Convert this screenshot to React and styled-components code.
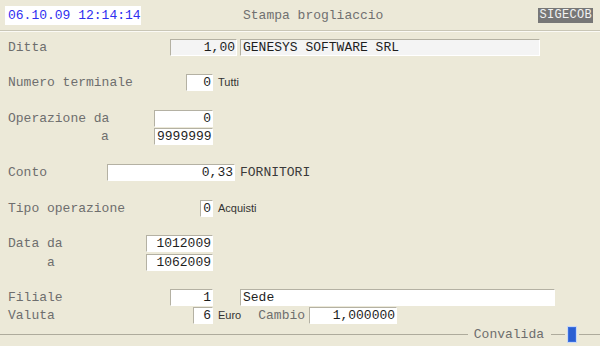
import React from "react";
import styled, { createGlobalStyle } from "styled-components";

const Global = createGlobalStyle`
  html, body {
    margin: 0;
    padding: 0;
    background: #ece9d8;
  }
  body {
    font-family: "Liberation Mono", "Courier New", monospace;
    font-size: 13px;
  }
`;

const Screen = styled.div`
  width: 600px;
  height: 346px;
  background: #ece9d8;
  overflow: hidden;
`;

const Header = styled.div`
  display: flex;
  align-items: center;
  height: 30px;
  border-bottom: 1px solid #c9c6b6;
  box-shadow: 0 1px 0 #fbfaf5;
`;

const Clock = styled.div`
  margin-left: 5px;
  width: 136px;
  height: 19px;
  box-sizing: border-box;
  padding-left: 3px;
  background: #fff;
  color: #2f2ff0;
  line-height: 19px;
  white-space: nowrap;
`;

const Title = styled.div`
  margin-left: 102px;
  color: #707070;
`;

const Brand = styled.div`
  margin-left: auto;
  margin-right: 7px;
  height: 15px;
  line-height: 15px;
  padding: 0 1px;
  background: #777;
  color: #f2f2f2;
  font-size: 12px;
  letter-spacing: 0.3px;
`;

const Form = styled.div`
  padding-top: 7px;
`;

const Row = styled.div`
  display: flex;
  align-items: center;
  height: 18px;
  margin-top: ${(p) => p.$gap || 0}px;
`;

const Left = styled.div`
  display: flex;
  align-items: center;
  width: ${(p) => p.$edge}px;
  box-sizing: border-box;
  padding-left: 8px;
`;

const Label = styled.span`
  color: #6e6e6e;
  white-space: pre;
  padding-left: ${(p) => p.$indent || 0}px;
`;

const Field = styled.div`
  margin-left: ${(p) => (p.$auto ? "auto" : `${p.$ml || 0}px`)};
  width: ${(p) => p.$w}px;
  height: 17px;
  box-sizing: border-box;
  border-top: 1px solid #b4b1a3;
  border-left: 1px solid #b4b1a3;
  border-right: 1px solid ${(p) => (p.$grey ? "#fff" : "transparent")};
  border-bottom: 1px solid ${(p) => (p.$grey ? "#fff" : "transparent")};
  background: ${(p) => (p.$grey ? "#f4f4f4" : "#fff")};
  color: #1e1e1e;
  line-height: 15px;
  text-align: ${(p) => (p.$left ? "left" : "right")};
  padding: 0 1px 0 2px;
  white-space: pre;
  overflow: hidden;
`;

const Note = styled.span`
  margin-left: ${(p) => p.$ml || 5}px;
  font-family: "Liberation Sans", Arial, sans-serif;
  font-size: 11px;
  color: #333;
`;

const Desc = styled.span`
  margin-left: ${(p) => p.$ml || 5}px;
  color: ${(p) => (p.$grey ? "#6e6e6e" : "#3a3a3a")};
  white-space: pre;
`;

const Footer = styled.div`
  display: flex;
  align-items: center;
  height: 18px;
  margin-top: 1px;
`;

const Rule = styled.div`
  height: 1px;
  background: #aeab9c;
  flex: ${(p) => (p.$w ? `0 0 ${p.$w}px` : "1")};
  margin-right: ${(p) => p.$mr || 0}px;
  margin-left: ${(p) => p.$ml || 0}px;
`;

const Legend = styled.span`
  padding: 0 7px 0 6px;
  color: #6e6e6e;
`;

const OkButton = styled.button`
  width: 10px;
  height: 17px;
  padding: 0;
  border: 1px solid #c9d8f3;
  background: #2b5fd2;
  box-shadow: inset 0 0 0 1px #3b6fe0;
`;

export default function App() {
  return (
    <Screen>
      <Global />
      <Header>
        <Clock>06.10.09 12:14:14</Clock>
        <Title>Stampa brogliaccio</Title>
        <Brand>SIGECOB</Brand>
      </Header>
      <Form>
        <Row>
          <Left $edge={237}>
            <Label>Ditta</Label>
            <Field $auto $w={67} $grey>1,00</Field>
          </Left>
          <Field $ml={3} $w={300} $grey $left>GENESYS SOFTWARE SRL</Field>
        </Row>

        <Row $gap={17}>
          <Left $edge={213}>
            <Label>Numero terminale</Label>
            <Field $auto $w={27}>0</Field>
          </Left>
          <Note>Tutti</Note>
        </Row>

        <Row $gap={18}>
          <Left $edge={213}>
            <Label>Operazione da</Label>
            <Field $auto $w={59}>0</Field>
          </Left>
        </Row>
        <Row>
          <Left $edge={213}>
            <Label $indent={93}>a</Label>
            <Field $auto $w={59}>9999999</Field>
          </Left>
        </Row>

        <Row $gap={18}>
          <Left $edge={235}>
            <Label>Conto</Label>
            <Field $auto $w={128}>0,33</Field>
          </Left>
          <Desc>FORNITORI</Desc>
        </Row>

        <Row $gap={18}>
          <Left $edge={213}>
            <Label>Tipo operazione</Label>
            <Field $auto $w={13}>0</Field>
          </Left>
          <Note>Acquisti</Note>
        </Row>

        <Row $gap={17}>
          <Left $edge={213}>
            <Label>Data da</Label>
            <Field $auto $w={67}>1012009</Field>
          </Left>
        </Row>
        <Row $gap={1}>
          <Left $edge={213}>
            <Label $indent={39}>a</Label>
            <Field $auto $w={67}>1062009</Field>
          </Left>
        </Row>

        <Row $gap={17}>
          <Left $edge={213}>
            <Label>Filiale</Label>
            <Field $auto $w={43}>1</Field>
          </Left>
          <Field $ml={27} $w={315} $left>Sede</Field>
        </Row>
        <Row>
          <Left $edge={213}>
            <Label>Valuta</Label>
            <Field $auto $w={20}>6</Field>
          </Left>
          <Note>Euro</Note>
          <Desc $grey $ml={17}>Cambio</Desc>
          <Field $ml={4} $w={88}>1,000000</Field>
        </Row>
      </Form>
      <Footer>
        <Rule />
        <Legend>Convalida</Legend>
        <Rule $w={14} $mr={2} />
        <OkButton aria-label="Convalida" />
        <Rule $w={21} $ml={2} />
      </Footer>
    </Screen>
  );
}
